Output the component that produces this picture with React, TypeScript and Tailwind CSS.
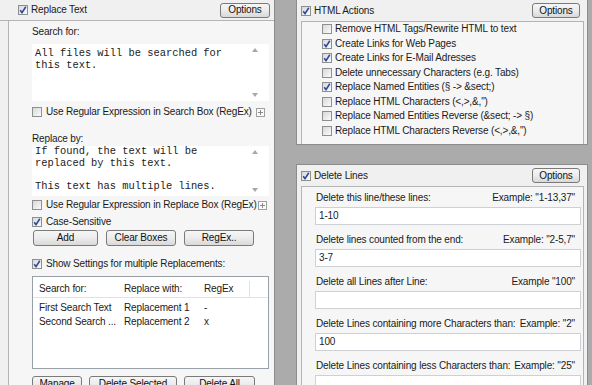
import React from "react";

function Check({ checked }: { checked?: boolean }) {
  return (
    <span className="inline-flex w-[10px] h-[10px] shrink-0 items-center justify-center border border-[#8e8f8f] bg-gradient-to-br from-[#d8d8d8] to-[#fbfbfb]">
      {checked && (
        <svg width="8" height="8" viewBox="0 0 8 8">
          <path d="M1.2 4.3 L3 6.6 L6.8 0.8" stroke="#2b4aa0" strokeWidth="1.6" fill="none" />
        </svg>
      )}
    </span>
  );
}

function Btn({ children, className }: { children: React.ReactNode; className: string }) {
  return (
    <div
      className={
        "flex items-center justify-center border border-[#7a7a7a] rounded-[3px] bg-gradient-to-b from-[#f6f6f6] via-[#ececec] to-[#d9d9d9] text-[10px] leading-none text-[#111] " +
        className
      }
    >
      {children}
    </div>
  );
}

function Plus() {
  return (
    <span className="inline-flex w-[9px] h-[9px] border border-[#a0a0a0] bg-[#fafafa] items-center justify-center">
      <svg width="7" height="7" viewBox="0 0 7 7">
        <path d="M3.5 1 V6 M1 3.5 H6" stroke="#8a8a8a" strokeWidth="1" />
      </svg>
    </span>
  );
}

function Arrows() {
  return (
    <div className="w-[16px] mr-[6px] flex flex-col justify-between items-center py-[4px]">
      <svg width="6" height="4" viewBox="0 0 6 4">
        <path d="M0 4 L3 0 L6 4 Z" fill="#a8a8a8" />
      </svg>
      <svg width="6" height="4" viewBox="0 0 6 4">
        <path d="M0 0 L6 0 L3 4 Z" fill="#a8a8a8" />
      </svg>
    </div>
  );
}

function CheckRow({ checked, label, className }: { checked?: boolean; label: string; className?: string }) {
  return (
    <div className={"flex items-center gap-[4px] h-[12px] " + (className || "")}>
      <Check checked={checked} />
      <span className="whitespace-nowrap">{label}</span>
    </div>
  );
}

function LeftPanel() {
  return (
    <div className="w-[275px] h-full shrink-0 bg-[#f0f0f0] border-r border-[#8c8c8c] flex flex-col">
      <div className="h-[21px] shrink-0 flex items-center pl-[18px] pr-[4px] border-b border-[#b4b4b4]">
        <Check checked />
        <span className="ml-[3px]">Replace Text</span>
        <Btn className="ml-auto w-[50px] h-[15px]">Options</Btn>
      </div>
      <div className="flex-1 ml-[8px] border-l border-[#b4b4b4] bg-[#f6f6f6] pl-[23px] pr-[5px] flex flex-col">
        <div className="mt-[5px] h-[12px] leading-[12px]">Search for:</div>
        <div className="mt-[6px] h-[57px] bg-white flex">
          <div className="flex-1 pl-[3px] pt-[3px] font-['Liberation_Mono',monospace] text-[10.4px] leading-[12px] text-[#222] tracking-normal">
            <div>All files will be searched for</div>
            <div>this text.</div>
          </div>
          <Arrows />
        </div>
        <div className="mt-[5px] flex items-center justify-between pr-[4px]">
          <CheckRow label="Use Regular Expression in Search Box (RegEx)" />
          <Plus />
        </div>
        <div className="mt-[15px] h-[12px] leading-[12px]">Replace by:</div>
        <div className="mt-[1px] h-[50px] bg-white flex">
          <div className="flex-1 pl-[3px] pt-[0px] font-['Liberation_Mono',monospace] text-[10.4px] leading-[11.7px] text-[#222] tracking-normal">
            <div>If found, the text will be</div>
            <div>replaced by this text.</div>
            <div>&nbsp;</div>
            <div>This text has multiple lines.</div>
          </div>
          <Arrows />
        </div>
        <div className="mt-[3px] flex items-center justify-between pr-[2px]">
          <CheckRow label="Use Regular Expression in Replace Box (RegEx)" />
          <Plus />
        </div>
        <CheckRow checked label="Case-Sensitive" className="mt-[5px]" />
        <div className="mt-[2px] flex gap-[8px] pl-[1px]">
          <Btn className="w-[65px] h-[16px]">Add</Btn>
          <Btn className="w-[70px] h-[16px]">Clear Boxes</Btn>
          <Btn className="w-[70px] h-[16px]">RegEx..</Btn>
        </div>
        <CheckRow checked label="Show Settings for multiple Replacements:" className="mt-[12px]" />
        <div className="mt-[6px] h-[93px] shrink-0 bg-white border border-[#9aa0a8]">
          <div className="h-[21px] pt-[4px] flex items-center border-b border-[#e2e2e2]">
            <div className="w-[85px] pl-[6px]">Search for:</div>
            <div className="w-[80px] pl-[6px]">Replace with:</div>
            <div className="w-[52px] pl-[6px] h-full border-r border-[#e2e2e2] flex items-center">RegEx</div>
          </div>
          <div className="mt-[3px] flex h-[14px] items-center">
            <div className="w-[85px] pl-[6px] whitespace-nowrap">First Search Text</div>
            <div className="w-[80px] pl-[6px]">Replacement 1</div>
            <div className="w-[52px] pl-[6px]">-</div>
          </div>
          <div className="flex h-[14px] items-center">
            <div className="w-[85px] pl-[6px] whitespace-nowrap">Second Search ...</div>
            <div className="w-[80px] pl-[6px]">Replacement 2</div>
            <div className="w-[52px] pl-[6px]">x</div>
          </div>
        </div>
        <div className="mt-[7px] flex gap-[7px]">
          <Btn className="w-[50px] h-[16px] shrink-0">Manage</Btn>
          <Btn className="w-[88px] h-[16px] shrink-0">Delete Selected</Btn>
          <Btn className="w-[71px] h-[16px] shrink-0">Delete All</Btn>
        </div>
      </div>
    </div>
  );
}

const htmlItems: [string, boolean][] = [
  ["Remove HTML Tags/Rewrite HTML to text", false],
  ["Create Links for Web Pages", true],
  ["Create Links for E-Mail Adresses", true],
  ["Delete unnecessary Characters (e.g. Tabs)", false],
  ["Replace Named Entities (§ -> &sect;)", true],
  ['Replace HTML Characters (<,>,&,")', false],
  ["Replace Named Entities Reverse (&sect; -> §)", false],
  ['Replace HTML Characters Reverse (<,>,&,")', false],
];

const delRows: [string, string, string][] = [
  ["Delete this line/these lines:", 'Example: "1-13,37"', "1-10"],
  ["Delete lines counted from the end:", 'Example: "2-5,7"', "3-7"],
  ["Delete all Lines after Line:", 'Example "100"', ""],
  ["Delete Lines containing more Characters than:", 'Example: "2"', "100"],
  ["Delete Lines containing less Characters than:", 'Example: "25"', ""],
];

function Header({ title }: { title: string }) {
  return (
    <div className="h-[21px] shrink-0 flex items-center pl-[4px] pr-[7px]">
      <Check checked />
      <span className="ml-[3px]">{title}</span>
      <Btn className="ml-auto w-[48px] h-[15px]">Options</Btn>
    </div>
  );
}

function RightColumn() {
  return (
    <div className="ml-[21px] w-[292px] shrink-0 flex flex-col">
      <div className="h-[145px] shrink-0 bg-[#f0f0f0] border-x border-b border-[#8c8c8c] flex flex-col">
        <Header title="HTML Actions" />
        <div className="flex-1 ml-[4px] mr-[3px] border-x border-t border-[#b4b4b4] bg-[#f6f6f6] pl-[20px] pt-[0px] flex flex-col">
          {htmlItems.map(([t, c]) => (
            <div key={t} className="h-[14.5px] flex items-center gap-[3px]">
              <Check checked={c} />
              <span className="whitespace-nowrap">{t}</span>
            </div>
          ))}
        </div>
      </div>
      <div className="mt-[19px] flex-1 bg-[#f0f0f0] border-x border-t border-[#8c8c8c] flex flex-col">
        <Header title="Delete Lines" />
        <div className="flex-1 ml-[4px] mr-[3px] border-x border-t border-[#b4b4b4] bg-[#f6f6f6] pl-[13px] pr-[2px] pt-[5px] flex flex-col">
          {delRows.map(([l, e, v], i) => (
            <div key={l} className={i > 0 ? "mt-[9px]" : ""}>
              <div className="h-[12px] leading-[12px] flex justify-between pl-[1px] pr-[6px]">
                <span className="whitespace-nowrap">{l}</span>
                <span className="whitespace-nowrap">{e}</span>
              </div>
              <div className="mt-[3px] h-[18px] bg-white border border-[#cdd1d6] pl-[3px] flex items-center">{v}</div>
            </div>
          ))}
        </div>
      </div>
    </div>
  );
}

export default function App() {
  return (
    <div className="w-[592px] h-[385px] overflow-hidden bg-[#ababab] flex font-['Liberation_Sans',Arial,sans-serif] text-[10px] tracking-[-0.15px] text-[#1a1a1a] leading-[12px]">
      <LeftPanel />
      <RightColumn />
    </div>
  );
}
